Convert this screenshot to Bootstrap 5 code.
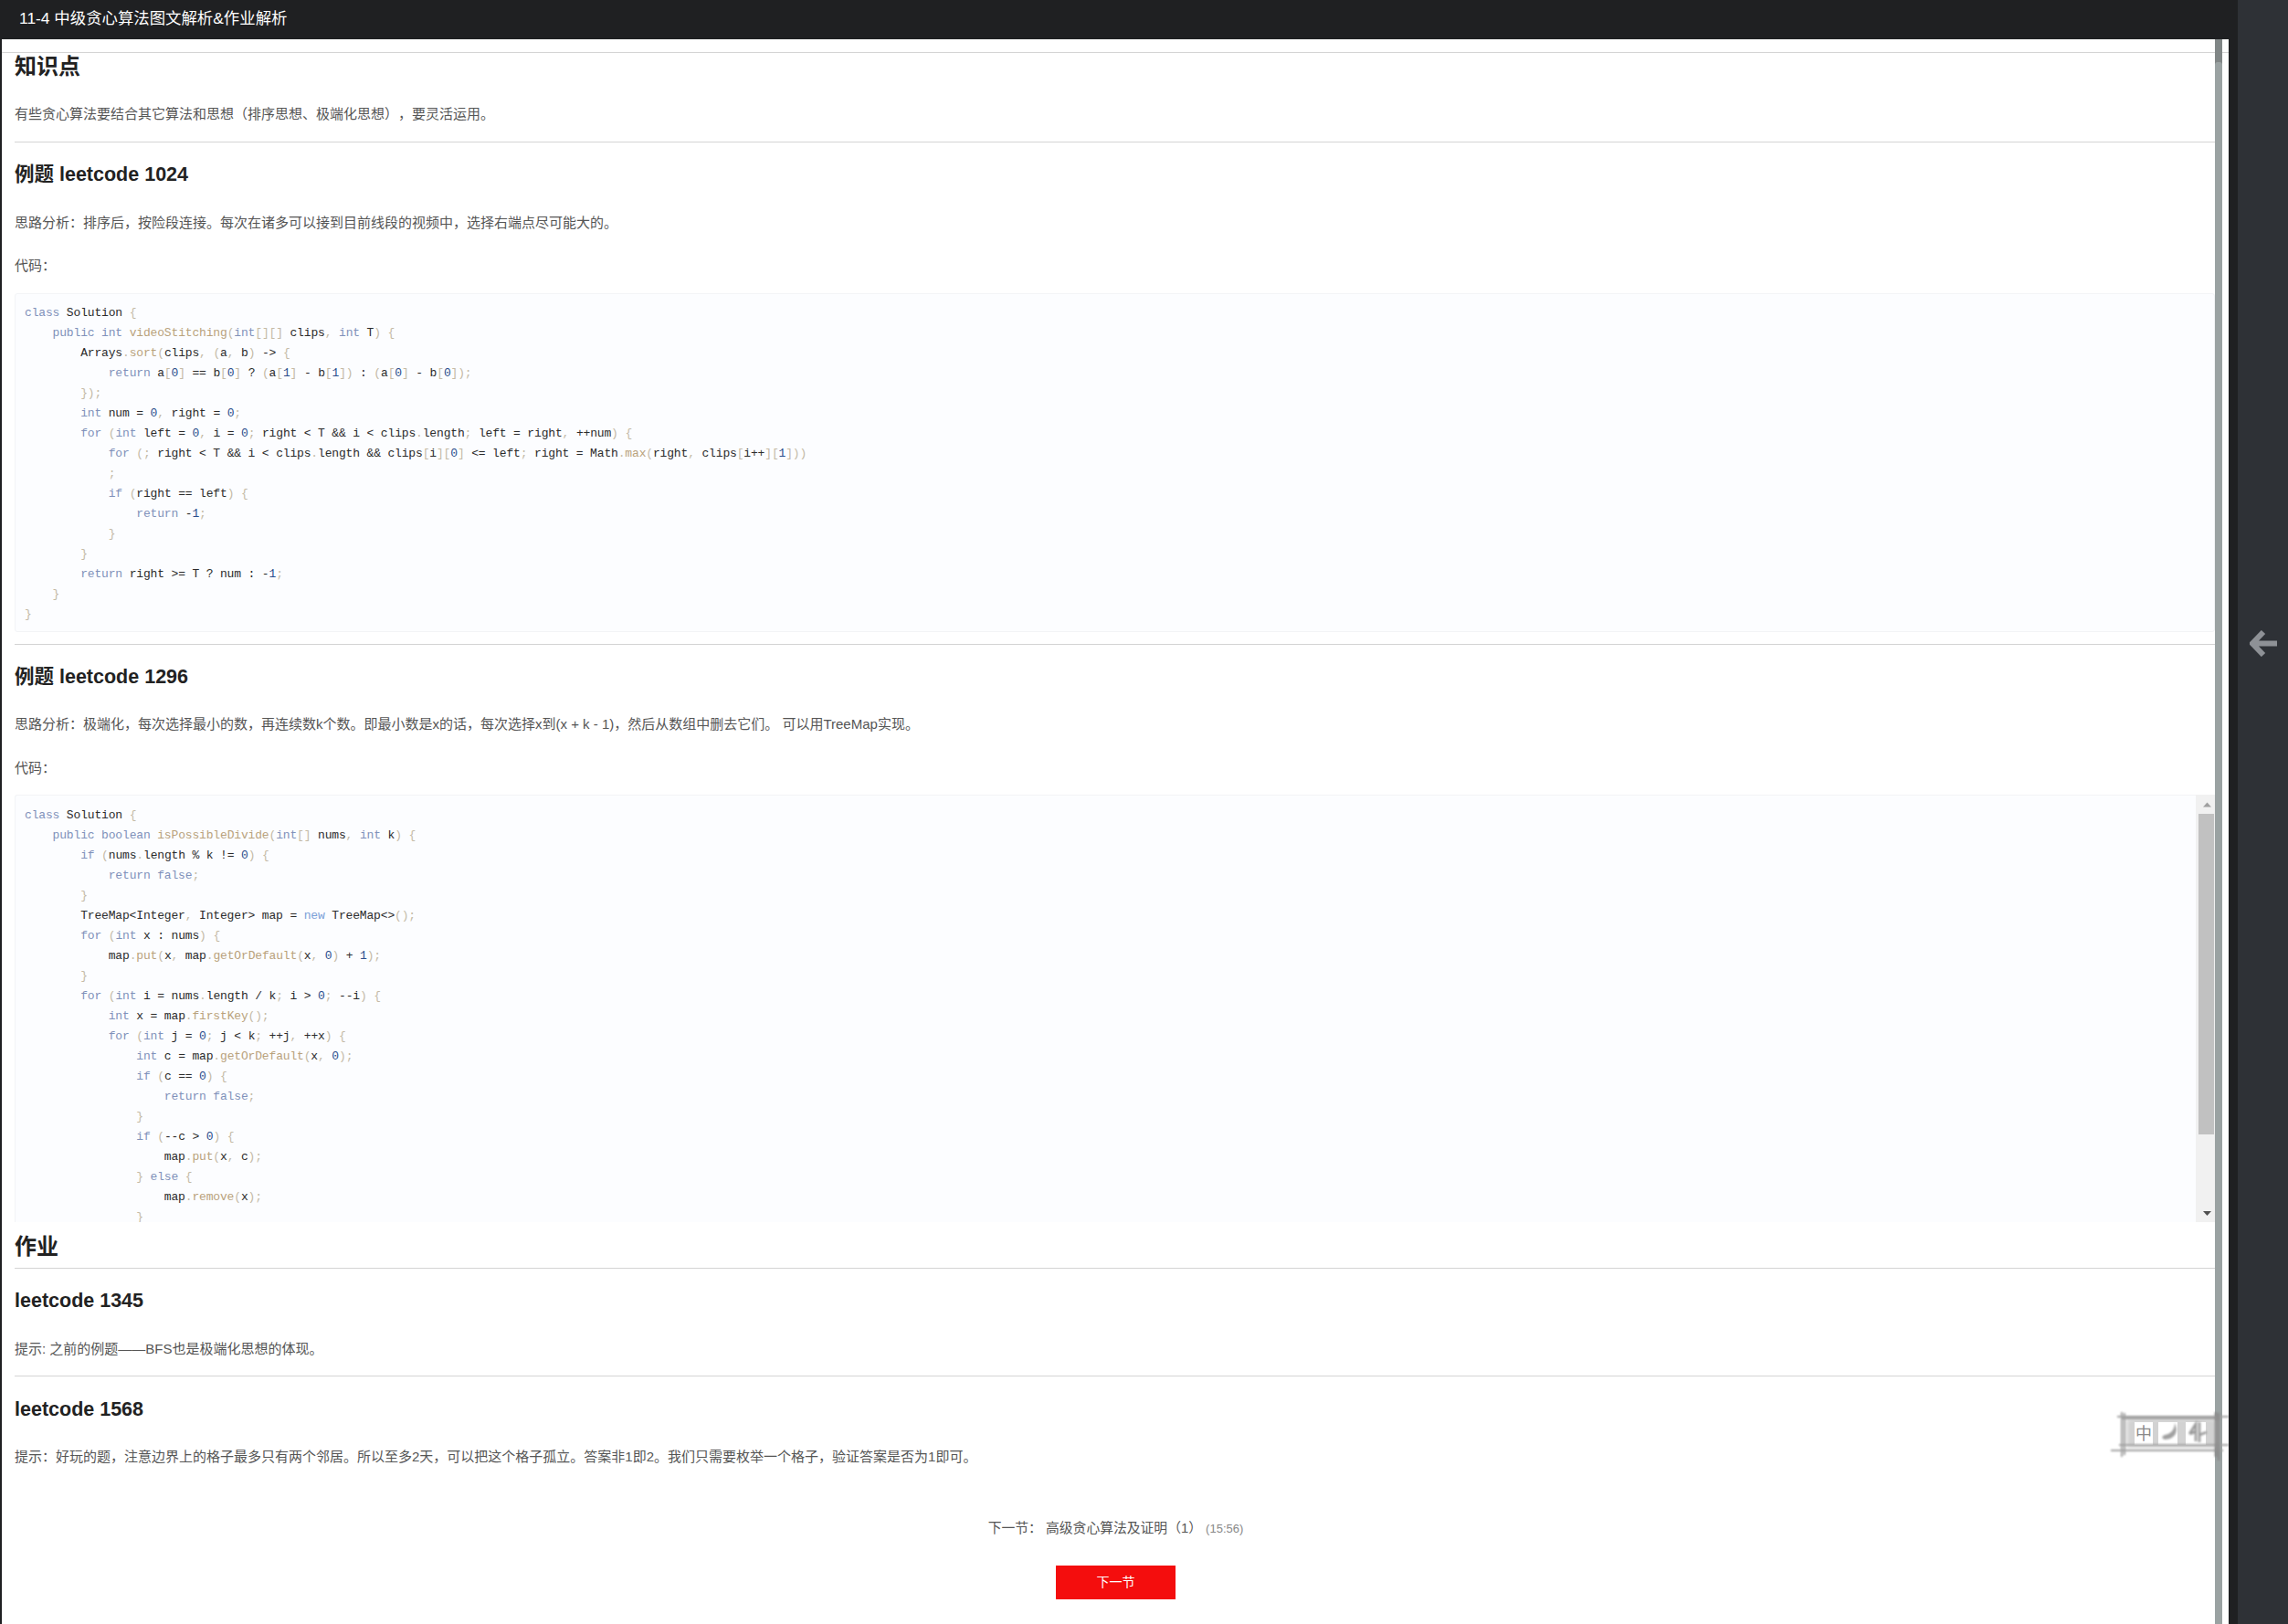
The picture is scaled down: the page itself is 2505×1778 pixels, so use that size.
<!DOCTYPE html>
<html lang="zh-CN">
<head>
<meta charset="utf-8">
<title>11-4 中级贪心算法图文解析&amp;作业解析</title>
<link href="https://cdn.jsdelivr.net/npm/bootstrap@5.3.0/dist/css/bootstrap.min.css" rel="stylesheet">
<style>
html,body{height:100%;overflow:hidden}
body{background:#2e3136;font-family:"Liberation Sans","Noto Sans CJK SC",sans-serif;color:#555;text-spacing-trim:space-all}
.lesson-col{width:2450px;height:1778px;background:#1f2022;flex:none}
.lesson-top{height:43px;line-height:40px;padding-left:21px;color:#fff;font-size:17.4px}
.lesson-sheet{position:relative;height:1735px;margin-left:2px;margin-right:10px;background:#fff;overflow:hidden}
.lesson-body{padding:14px 15px 0 14px}
.top-rule{height:1px;background:#d4d4d4;margin:0 -15px 0 -14px}
.rule{height:1px;background:#d4d4d4;border:0;opacity:1;margin:0}
.title-a,.title-b{margin:0;font-weight:700;color:#222;line-height:28px}
.title-a{font-size:24px}
.title-b{font-size:21.5px}
.copy{margin:0;font-size:15px;line-height:24px;color:#555}
.codebox{margin:0;background:#fcfdff;border:1px solid #f3f4f6;border-radius:3px;padding:10px 10px 7px;font-family:"Liberation Mono",monospace;font-size:13px;letter-spacing:-.16px;line-height:22px;color:#2b2b2b;overflow:hidden}
.code-frame{height:468px}
.code-frame .codebox{padding-top:11px;border-right:0;border-bottom:0;border-radius:3px 0 0 0;min-width:0}
.fake-bar{width:21px;background:#f1f1f1;flex:none}
.fake-step{height:21px;flex:none}
.fake-thumb{height:351px;background:#c1c1c1;margin:0 1px 0 3px;flex:none}
.c-k{color:#8091ba}.c-p{color:#c4baa6}.c-f{color:#b9a27c}.c-n{color:#2b4e8c}.c-w{color:#7aa0d8}
.next-line{font-size:14.8px;line-height:24px;color:#555;padding-left:2px}
.next-time{font-size:13px;color:#888}
.btn.next-btn{display:block;width:131px;height:37px;padding:0;line-height:37px;margin:28px 0 0 calc(50% - 64.5px);background:#f40d0d;border:0;border-radius:0;color:#fff;font-size:14px}
.btn.next-btn:hover{background:#f40d0d;color:#fff}
.page-bar{position:absolute;left:2423px;top:0;bottom:0;width:8px;background:#808686}
.page-bar-thumb{position:absolute;left:0;right:0;top:25px;bottom:0;background:#9aa2a2;border-radius:3px 3px 0 0}
.skin-badge{position:absolute;left:2308px;top:1502px;width:132px;height:54px;overflow:visible}
.side-rail{width:55px;flex:none}
.side-arrow{width:30px;height:29px;margin-top:690px;margin-left:13px;display:block}
.s1{margin-top:1px}.s9{margin-top:9px}.s13{margin-top:13px}.s17{margin-top:17px}.s18{margin-top:18px}.s21{margin-top:21px}.s22{margin-top:22px}.s23{margin-top:23px}.s24{margin-top:24px}.s26{margin-top:26px}.s27{margin-top:27px}.s54{margin-top:54px}
</style>
</head>
<body>
<div class="d-flex">
  <div class="lesson-col">
    <div class="lesson-top">11-4 中级贪心算法图文解析&amp;作业解析</div>
    <div class="lesson-sheet">
      <div class="lesson-body">
        <div class="top-rule"></div>
        <h2 class="title-a s1">知识点</h2>
        <p class="copy s26">有些贪心算法要结合其它算法和思想（排序思想、极端化思想），要灵活运用。</p>
        <hr class="rule s18">
        <h3 class="title-b s21">例题 leetcode 1024</h3>
        <p class="copy s27">思路分析：排序后，按险段连接。每次在诸多可以接到目前线段的视频中，选择右端点尽可能大的。</p>
        <p class="copy s23">代码：</p>
<pre class="codebox s18"><span class="c-k">class</span> Solution <span class="c-p">{</span>
    <span class="c-k">public int</span> <span class="c-f">videoStitching</span><span class="c-p">(</span><span class="c-k">int</span><span class="c-p">[][]</span> clips<span class="c-p">,</span> <span class="c-k">int</span> T<span class="c-p">) {</span>
        Arrays<span class="c-p">.</span><span class="c-f">sort</span><span class="c-p">(</span>clips<span class="c-p">, (</span>a<span class="c-p">,</span> b<span class="c-p">)</span> -&gt; <span class="c-p">{</span>
            <span class="c-k">return</span> a<span class="c-p">[</span><span class="c-n">0</span><span class="c-p">]</span> == b<span class="c-p">[</span><span class="c-n">0</span><span class="c-p">]</span> ? <span class="c-p">(</span>a<span class="c-p">[</span><span class="c-n">1</span><span class="c-p">]</span> - b<span class="c-p">[</span><span class="c-n">1</span><span class="c-p">])</span> : <span class="c-p">(</span>a<span class="c-p">[</span><span class="c-n">0</span><span class="c-p">]</span> - b<span class="c-p">[</span><span class="c-n">0</span><span class="c-p">]);</span>
        <span class="c-p">});</span>
        <span class="c-k">int</span> num = <span class="c-n">0</span><span class="c-p">,</span> right = <span class="c-n">0</span><span class="c-p">;</span>
        <span class="c-k">for</span> <span class="c-p">(</span><span class="c-k">int</span> left = <span class="c-n">0</span><span class="c-p">,</span> i = <span class="c-n">0</span><span class="c-p">;</span> right &lt; T &amp;&amp; i &lt; clips<span class="c-p">.</span>length<span class="c-p">;</span> left = right<span class="c-p">,</span> ++num<span class="c-p">) {</span>
            <span class="c-k">for</span> <span class="c-p">(;</span> right &lt; T &amp;&amp; i &lt; clips<span class="c-p">.</span>length &amp;&amp; clips<span class="c-p">[</span>i<span class="c-p">][</span><span class="c-n">0</span><span class="c-p">]</span> &lt;= left<span class="c-p">;</span> right = Math<span class="c-p">.</span><span class="c-f">max</span><span class="c-p">(</span>right<span class="c-p">,</span> clips<span class="c-p">[</span>i++<span class="c-p">][</span><span class="c-n">1</span><span class="c-p">]))</span>
            <span class="c-p">;</span>
            <span class="c-k">if</span> <span class="c-p">(</span>right == left<span class="c-p">) {</span>
                <span class="c-k">return</span> -<span class="c-n">1</span><span class="c-p">;</span>
            <span class="c-p">}</span>
        <span class="c-p">}</span>
        <span class="c-k">return</span> right &gt;= T ? num : -<span class="c-n">1</span><span class="c-p">;</span>
    <span class="c-p">}</span>
<span class="c-p">}</span></pre>
        <hr class="rule s13">
        <h3 class="title-b s21">例题 leetcode 1296</h3>
        <p class="copy s26">思路分析：极端化，每次选择最小的数，再连续数k个数。即最小数是x的话，每次选择x到(x + k - 1)，然后从数组中删去它们。 可以用TreeMap实现。</p>
        <p class="copy s24">代码：</p>
        <div class="code-frame d-flex s17">
<pre class="codebox flex-grow-1"><span class="c-k">class</span> Solution <span class="c-p">{</span>
    <span class="c-k">public boolean</span> <span class="c-f">isPossibleDivide</span><span class="c-p">(</span><span class="c-k">int</span><span class="c-p">[]</span> nums<span class="c-p">,</span> <span class="c-k">int</span> k<span class="c-p">) {</span>
        <span class="c-k">if</span> <span class="c-p">(</span>nums<span class="c-p">.</span>length % k != <span class="c-n">0</span><span class="c-p">) {</span>
            <span class="c-k">return false</span><span class="c-p">;</span>
        <span class="c-p">}</span>
        TreeMap&lt;Integer<span class="c-p">,</span> Integer&gt; map = <span class="c-w">new</span> TreeMap&lt;&gt;<span class="c-p">();</span>
        <span class="c-k">for</span> <span class="c-p">(</span><span class="c-k">int</span> x : nums<span class="c-p">) {</span>
            map<span class="c-p">.</span><span class="c-f">put</span><span class="c-p">(</span>x<span class="c-p">,</span> map<span class="c-p">.</span><span class="c-f">getOrDefault</span><span class="c-p">(</span>x<span class="c-p">,</span> <span class="c-n">0</span><span class="c-p">)</span> + <span class="c-n">1</span><span class="c-p">);</span>
        <span class="c-p">}</span>
        <span class="c-k">for</span> <span class="c-p">(</span><span class="c-k">int</span> i = nums<span class="c-p">.</span>length / k<span class="c-p">;</span> i &gt; <span class="c-n">0</span><span class="c-p">;</span> --i<span class="c-p">) {</span>
            <span class="c-k">int</span> x = map<span class="c-p">.</span><span class="c-f">firstKey</span><span class="c-p">();</span>
            <span class="c-k">for</span> <span class="c-p">(</span><span class="c-k">int</span> j = <span class="c-n">0</span><span class="c-p">;</span> j &lt; k<span class="c-p">;</span> ++j<span class="c-p">,</span> ++x<span class="c-p">) {</span>
                <span class="c-k">int</span> c = map<span class="c-p">.</span><span class="c-f">getOrDefault</span><span class="c-p">(</span>x<span class="c-p">,</span> <span class="c-n">0</span><span class="c-p">);</span>
                <span class="c-k">if</span> <span class="c-p">(</span>c == <span class="c-n">0</span><span class="c-p">) {</span>
                    <span class="c-k">return false</span><span class="c-p">;</span>
                <span class="c-p">}</span>
                <span class="c-k">if</span> <span class="c-p">(</span>--c &gt; <span class="c-n">0</span><span class="c-p">) {</span>
                    map<span class="c-p">.</span><span class="c-f">put</span><span class="c-p">(</span>x<span class="c-p">,</span> c<span class="c-p">);</span>
                <span class="c-p">}</span> <span class="c-k">else</span> <span class="c-p">{</span>
                    map<span class="c-p">.</span><span class="c-f">remove</span><span class="c-p">(</span>x<span class="c-p">);</span>
                <span class="c-p">}</span></pre>
          <div class="fake-bar d-flex flex-column">
            <svg class="fake-step" viewBox="0 0 21 21"><path d="M12.5 8.5L17 13.5H8z" fill="#a0a0a0"/></svg>
            <div class="fake-thumb"></div>
            <div class="flex-grow-1"></div>
            <svg class="fake-step" viewBox="0 0 21 21"><path d="M8 9H17L12.5 14z" fill="#505050"/></svg>
          </div>
        </div>
        <h2 class="title-a s13">作业</h2>
        <hr class="rule s9">
        <h3 class="title-b s21">leetcode 1345</h3>
        <p class="copy s27">提示: 之前的例题——BFS也是极端化思想的体现。</p>
        <hr class="rule s17">
        <h3 class="title-b s22">leetcode 1568</h3>
        <p class="copy s26">提示：好玩的题，注意边界上的格子最多只有两个邻居。所以至多2天，可以把这个格子孤立。答案非1即2。我们只需要枚举一个格子，验证答案是否为1即可。</p>
        <div class="text-center next-line s54">下一节： 高级贪心算法及证明（1） <span class="next-time">(15:56)</span></div>
        <a class="btn next-btn" href="#">下一节</a>
      </div>
      <div class="page-bar"><div class="page-bar-thumb"></div></div>
      <svg class="skin-badge" viewBox="0 0 132 54" aria-label="中">
        <defs><filter id="soft"><feGaussianBlur stdDeviation="0.9"/></filter><filter id="softer"><feGaussianBlur stdDeviation="2.5"/></filter></defs>
        <rect x="18" y="8" width="100" height="32" fill="#d2d2d2" filter="url(#softer)"/>
        <rect x="27" y="12" width="20" height="25" fill="#fff"/><rect x="53" y="12" width="21" height="25" fill="#fff"/><rect x="83" y="12" width="22" height="25" fill="#fff"/>
        <g stroke="#a2a2a2" fill="none" filter="url(#soft)">
          <path d="M8 6H130M12 8H122" stroke-width="2"/>
          <path d="M10 37H130M1 43H124" stroke-width="2"/>
          <path d="M13 1V50M16 2V48" stroke-width="2"/>
          <path d="M116 1V50M119 2V54" stroke-width="2.5" stroke="#8a8a8a"/>
        </g>
        <text x="37" y="31" text-anchor="middle" font-size="18" fill="#8a8a8a" font-family="'Noto Sans CJK SC',sans-serif">中</text>
        <path d="M60 31C70 31 76 24 71 13C71 21 66 25 60 26C57 27 56 30 60 31Z" fill="#a0a0a0" filter="url(#soft)"/>
        <path d="M87 25L94 14V33M98 12V34M98 26L106 23M94 22L88 25" fill="none" stroke="#9a9a9a" stroke-width="2.6" filter="url(#soft)"/>
      </svg>
    </div>
  </div>
  <div class="side-rail">
    <svg class="side-arrow" viewBox="0 0 30 29"><path d="M15 2L3 14.5L15 27M3 14.5H30" fill="none" stroke="#8e9196" stroke-width="6"/></svg>
  </div>
</div>
<script src="https://cdn.jsdelivr.net/npm/bootstrap@5.3.0/dist/js/bootstrap.bundle.min.js"></script>
</body>
</html>
